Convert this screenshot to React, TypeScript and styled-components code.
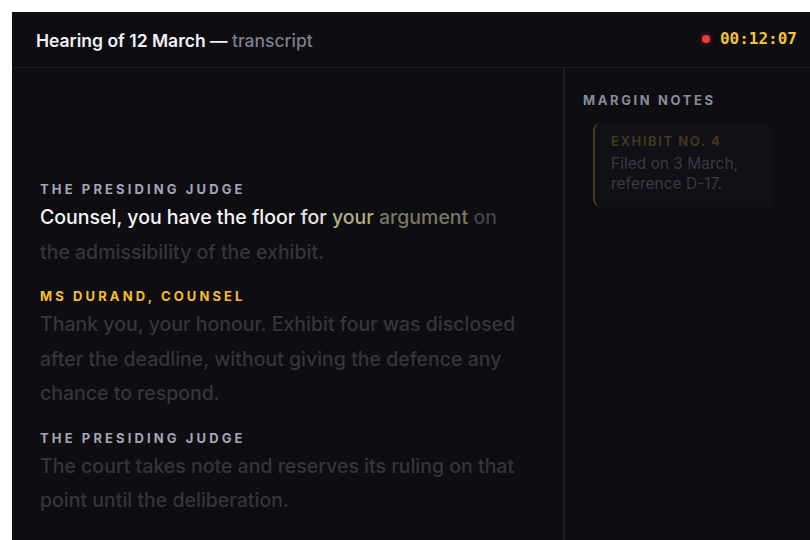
import styled, { createGlobalStyle } from 'styled-components';

const GlobalStyle = createGlobalStyle`
  html, body {
    margin: 0;
    background: #ffffff;
    overflow: hidden;
  }
  body {
    padding: 12px 0 0 12px;
    font-family: Inter, "Noto Sans", "Liberation Sans", sans-serif;
  }
`;

type Tone = 'spoken' | 'current' | 'next' | 'soon' | 'near' | 'pending';

const TONES: Record<Tone, string> = {
  spoken: '#f4f4f6',
  current: '#e6e4de',
  next: '#b3ab83',
  soon: '#7b775f',
  near: '#43434a',
  pending: '#35353c',
};

type Turn = {
  id: string;
  speaker: string;
  counsel?: boolean;
  words: { text: string; tone: Tone }[];
};

const TURNS: Turn[] = [
  {
    id: 't1',
    speaker: 'The presiding judge',
    words: [
      { text: 'Counsel, you have the floor', tone: 'spoken' },
      { text: 'for', tone: 'current' },
      { text: 'your', tone: 'next' },
      { text: 'argument', tone: 'soon' },
      { text: 'on', tone: 'near' },
      { text: 'the admissibility of the exhibit.', tone: 'pending' },
    ],
  },
  {
    id: 't2',
    speaker: 'Ms Durand, counsel',
    counsel: true,
    words: [
      {
        text: 'Thank you, your honour. Exhibit four was disclosed after the deadline, without giving the defence any chance to respond.',
        tone: 'pending',
      },
    ],
  },
  {
    id: 't3',
    speaker: 'The presiding judge',
    words: [
      {
        text: 'The court takes note and reserves its ruling on that point until the deliberation.',
        tone: 'pending',
      },
    ],
  },
];

// ========== Layout ==========
const Shell = styled.div`
  width: 810px;
  height: 528px;
  background: #0d0d12;
  display: flex;
  flex-direction: column;
  color: #f1f1f4;
`;

const Header = styled.header`
  height: 56px;
  flex-shrink: 0;
  display: flex;
  align-items: center;
  justify-content: space-between;
  padding: 0 24px;
  border-bottom: 1px solid #1c1c24;
  box-sizing: border-box;
`;

const Title = styled.h1`
  margin: 2px 0 0 0;
  font-size: 17.5px;
  font-weight: 600;
  color: #f1f1f4;
`;

const TitleMuted = styled.span`
  font-weight: 500;
  color: #7a7f8e;
`;

const Clock = styled.div`
  display: flex;
  align-items: center;
  gap: 10px;
  margin-right: 1px;
  margin-top: -2px;
`;

const RecDot = styled.span`
  width: 8px;
  height: 8px;
  border-radius: 50%;
  background: #ef3b3b;
  box-shadow: 0 0 6px rgba(239, 59, 59, 0.6);
`;

const Time = styled.span`
  font-family: "DejaVu Sans Mono", "Liberation Mono", monospace;
  font-size: 16px;
  font-weight: 700;
  color: #f2c23a;
`;

const Body = styled.div`
  flex: 1;
  display: grid;
  grid-template-columns: 553px 1fr;
  min-height: 0;
`;

// ========== Transcript ==========
const Transcript = styled.section`
  padding: 113px 28px 0 28px;
  border-right: 2px solid #1f1f27;
  display: flex;
  flex-direction: column;
  gap: 19px;
`;

const TurnBlock = styled.div`
  display: flex;
  flex-direction: column;
  gap: 3px;
`;

const Speaker = styled.div<{ $counsel?: boolean }>`
  font-size: 13px;
  line-height: 16px;
  font-weight: 700;
  text-transform: uppercase;
  letter-spacing: 0.24em;
  color: ${({ $counsel }) => ($counsel ? '#f7bd2a' : '#a2a7b6')};
`;

const Speech = styled.p`
  margin: 0;
  max-width: 485px;
  font-size: 19.5px;
  line-height: 34.5px;
  font-weight: 500;
`;

const Word = styled.span<{ $tone: Tone }>`
  color: ${({ $tone }) => TONES[$tone]};
`;

// ========== Margin notes ==========
const Notes = styled.aside`
  padding: 24px 18px 0 18px;
  display: flex;
  flex-direction: column;
  gap: 15px;
`;

const NotesLabel = styled.div`
  font-size: 13px;
  line-height: 16px;
  font-weight: 700;
  text-transform: uppercase;
  letter-spacing: 0.2em;
  color: #878c9a;
`;

const NoteCard = styled.div`
  box-sizing: border-box;
  margin-left: 10px;
  width: 180px;
  padding: 10px 16px 13px 16px;
  border-left: 2px solid #4a3f1c;
  border-radius: 8px;
  background: #101016;
  display: flex;
  flex-direction: column;
  gap: 5px;
`;

const NoteTitle = styled.div`
  font-size: 13px;
  line-height: 16px;
  font-weight: 700;
  text-transform: uppercase;
  letter-spacing: 0.12em;
  color: #3f3820;
`;

const NoteText = styled.div`
  font-size: 15.5px;
  line-height: 20px;
  color: #3a3a42;
`;

export default function App() {
  return (
    <>
      <GlobalStyle />
      <Shell>
        <Header>
          <Title>
            Hearing of 12 March — <TitleMuted>transcript</TitleMuted>
          </Title>
          <Clock>
            <RecDot />
            <Time>00:12:07</Time>
          </Clock>
        </Header>
        <Body>
          <Transcript>
            {TURNS.map((t) => (
              <TurnBlock key={t.id}>
                <Speaker $counsel={t.counsel}>{t.speaker}</Speaker>
                <Speech>
                  {t.words.map((w, i) => (
                    <Word key={i} $tone={w.tone}>
                      {w.text}
                      {i < t.words.length - 1 ? ' ' : ''}
                    </Word>
                  ))}
                </Speech>
              </TurnBlock>
            ))}
          </Transcript>
          <Notes>
            <NotesLabel>Margin notes</NotesLabel>
            <NoteCard>
              <NoteTitle>Exhibit no. 4</NoteTitle>
              <NoteText>Filed on 3 March, reference D-17.</NoteText>
            </NoteCard>
          </Notes>
        </Body>
      </Shell>
    </>
  );
}
